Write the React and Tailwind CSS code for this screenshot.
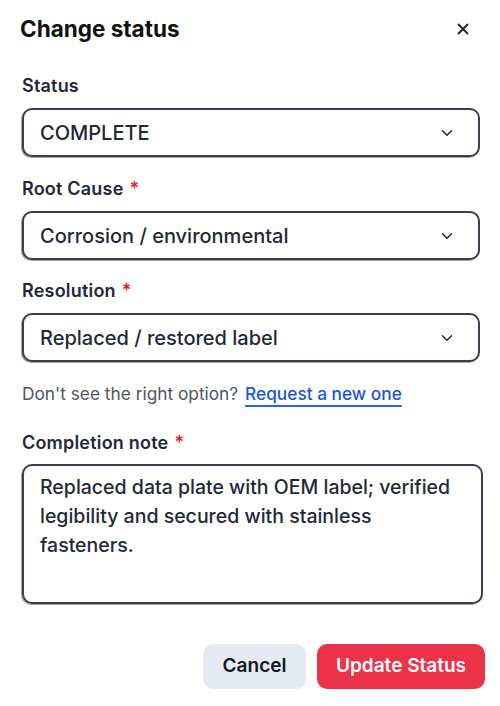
import React from 'react';
import { X, ChevronDown } from 'lucide-react';

const Label = ({ children, required }) => (
  <div className="h-6 flex items-center text-[18px] tracking-[0.2px] font-semibold text-[#1f2937] leading-6">
    {children}
    {required && <span className="text-[#ef1c24] ml-1.5">*</span>}
  </div>
);

const Select = ({ value }) => (
  <div className="mt-2.5 h-[49px] w-[458px] flex items-center justify-between pl-4 pr-[22px] rounded-[10px] border-2 border-[#3a3f4b] bg-white shadow-[-1px_1px_0_#9ca3af]">
    <span className="text-[20px] font-medium text-[#1f2937]">{value}</span>
    <ChevronDown size={18} strokeWidth={2} className="text-[#1f2937]" />
  </div>
);

const App = () => {
  return (
    <div className="w-[500px] h-[706px] bg-white px-[22px] pt-[15px] font-['Inter',sans-serif]">
      {/* Header */}
      <div className="flex items-center justify-between h-7 -ml-0.5">
        <h1 className="text-[22.5px] font-bold text-[#111111] leading-7">Change status</h1>
        <X size={18} strokeWidth={2.5} className="text-[#1f2937] mr-[6px]" />
      </div>

      <div className="mt-[31px]">
        <Label>Status</Label>
        <Select value="COMPLETE" />
      </div>

      <div className="mt-5">
        <Label required>Root Cause</Label>
        <Select value="Corrosion / environmental" />
      </div>

      <div className="mt-[19px]">
        <Label required>Resolution</Label>
        <Select value="Replaced / restored label" />
      </div>

      <p className="mt-[21px] h-[22px] text-[17.3px] leading-[22px] text-[#4b5563]">
        Don't see the right option?{' '}
        <a className="text-[#1a56db] font-medium underline decoration-2 underline-offset-[5px] decoration-[#2563eb] ml-0.5">Request a new one</a>
      </p>

      <div className="mt-[26px]">
        <Label required>Completion note</Label>
        <div className="mt-[9px] h-[140px] w-[461px] rounded-[10px] border-2 border-[#3a3f4b] shadow-[-1px_1px_0_#9ca3af] px-4 pt-[7px] text-[19.5px] font-medium leading-[29px] text-[#1f2937]">
          Replaced data plate with OEM label; verified legibility and secured with stainless fasteners.
        </div>
      </div>

      {/* Footer */}
      <div className="mt-[40px] flex justify-end gap-[11px] -mr-[7px]">
        <button className="h-[45px] w-[103px] rounded-[10px] bg-[#e5e9f0] text-[19px] font-semibold text-[#111827]">
          Cancel
        </button>
        <button className="h-[45px] w-[168px] rounded-[10px] bg-[#ec3249] text-[19px] font-semibold text-white">
          Update Status
        </button>
      </div>
    </div>
  );
};

export default App;
